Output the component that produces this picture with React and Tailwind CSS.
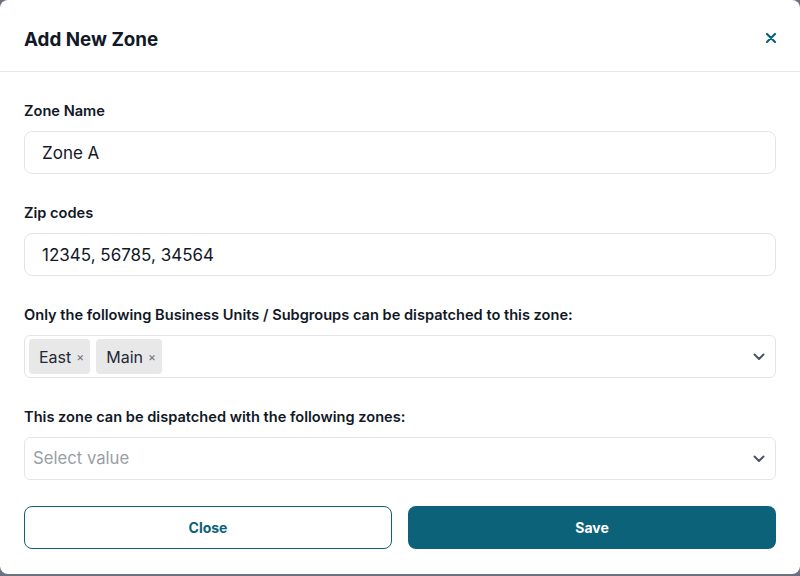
import { useState } from 'react'

function Chevron() {
  return (
    <svg width="12" height="8" viewBox="0 0 12 8" fill="none" className="shrink-0">
      <path d="M1.5 1.5l4.5 4.5 4.5-4.5" stroke="#4b5563" strokeWidth="2" strokeLinecap="round" strokeLinejoin="round" />
    </svg>
  )
}

function Chip({ label, onRemove }) {
  return (
    <div className="flex items-center h-[35px] pl-[10px] pr-[6px] rounded bg-[#e8e8e8] text-[16px] text-[#1f2937]">
      <span>{label}</span>
      <button onClick={onRemove} className="ml-[5px] text-[12px] leading-none text-[#6b7280]">×</button>
    </div>
  )
}

function Field({ label, children }) {
  return (
    <div className="flex flex-col">
      <label className="text-[14.6px] leading-5 font-semibold text-[#111827] mb-[10px]">{label}</label>
      {children}
    </div>
  )
}

export default function App() {
  const [name, setName] = useState('Zone A')
  const [zips, setZips] = useState('12345, 56785, 34564')
  const [units, setUnits] = useState(['East', 'Main'])

  return (
    <div className="h-[576px] w-full bg-gray-500 font-['Inter',sans-serif]">
      <div className="h-[574px] w-full bg-white rounded-lg flex flex-col">
        <header className="flex justify-between items-start pl-6 pr-6 pt-[26px] pb-[17px] border-b border-[#e5e7eb]">
          <h2 className="text-[18.8px] leading-7 font-bold text-[#111827]">Add New Zone</h2>
          <button className="mt-[2px] p-[5px] -mr-[5px]">
            <svg width="10" height="10" viewBox="0 0 10 10" fill="none">
              <path d="M1 1l8 8M9 1l-8 8" stroke="#0b6279" strokeWidth="2.2" strokeLinecap="round" />
            </svg>
          </button>
        </header>

        <main className="flex flex-col gap-[29px] px-6 pt-[29px]">
          <Field label="Zone Name">
            <input
              value={name}
              onChange={(e) => setName(e.target.value)}
              className="h-[43px] w-full rounded-lg border border-[#e2e4e8] pl-[17px] pr-3 text-[17px] text-[#111827] outline-none"
            />
          </Field>

          <Field label="Zip codes">
            <input
              value={zips}
              onChange={(e) => setZips(e.target.value)}
              className="h-[43px] w-full rounded-lg border border-[#e2e4e8] pl-[17px] pr-3 text-[17px] text-[#111827] outline-none"
            />
          </Field>

          <Field label="Only the following Business Units / Subgroups can be dispatched to this zone:">
            <div className="h-[43px] w-full rounded-md border border-[#e2e4e8] flex items-center pl-[4px] pr-[10px]">
              <div className="flex-1 flex items-center gap-[6px]">
                {units.map((u) => (
                  <Chip key={u} label={u} onRemove={() => setUnits(units.filter((x) => x !== u))} />
                ))}
              </div>
              <Chevron />
            </div>
          </Field>

          <Field label="This zone can be dispatched with the following zones:">
            <div className="h-[43px] w-full rounded-md border border-[#e2e4e8] flex items-center pl-[8px] pr-[10px]">
              <span className="flex-1 text-[16.7px] text-[#9a9ea6]">Select value</span>
              <Chevron />
            </div>
          </Field>
        </main>

        <footer className="grid grid-cols-2 gap-4 px-6 mt-[26px]">
          <button className="h-[43px] rounded-lg border border-[#0b6279] text-sm font-bold text-[#0b6279] bg-white">
            Close
          </button>
          <button className="h-[43px] rounded-lg bg-[#0b6279] text-sm font-bold text-white">
            Save
          </button>
        </footer>
      </div>
    </div>
  )
}
